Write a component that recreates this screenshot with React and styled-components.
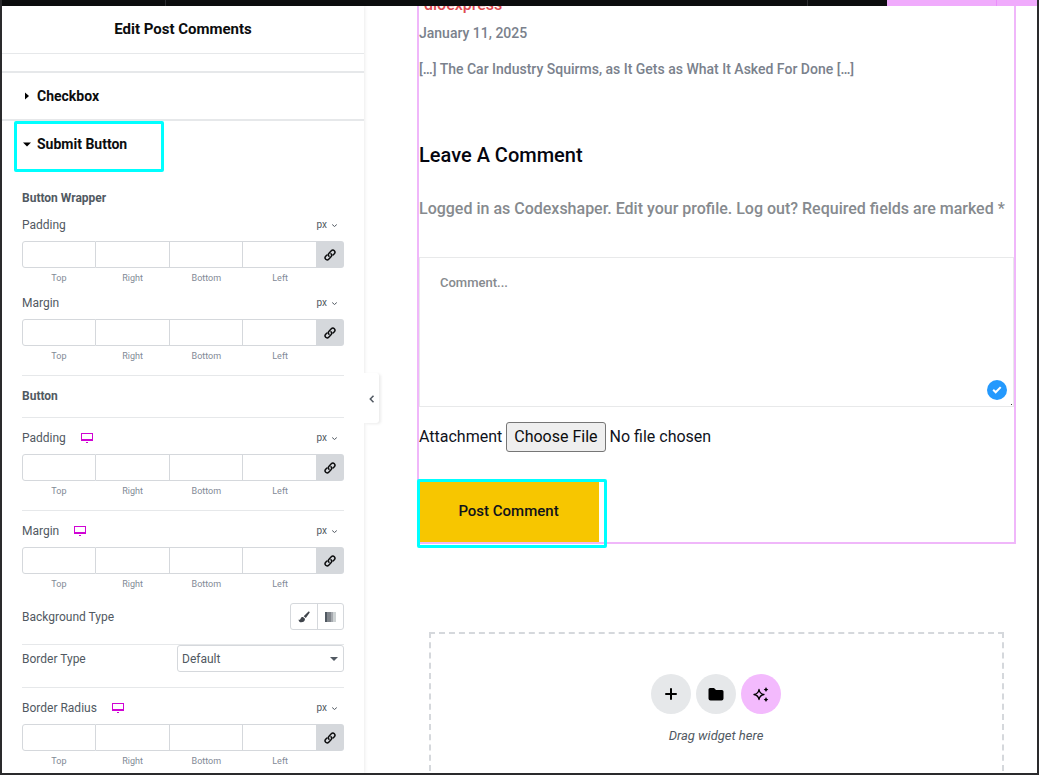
import React, { useId } from "react";
import styled, { createGlobalStyle, css } from "styled-components";

const Global = createGlobalStyle`
  *, *::before, *::after { box-sizing: border-box; }
  body { margin: 0; font-family: Roboto, "Liberation Sans", sans-serif; background: #fff; }
  button, input, select, textarea { font-family: inherit; margin: 0; }
`;

const line = "#e6e8ea";
const fieldLine = "#d5d8dc";

const Shell = styled.div`
  display: flex;
  flex-direction: column;
  height: 100vh;
  overflow: hidden;
  border: 2px solid #2a2a2c;
  border-top: 0;
`;

const TopBar = styled.header`
  display: flex;
  justify-content: space-between;
  flex: none;
  height: 6px;
  background: #0c0d0e;
`;

const BarCell = styled.div`
  width: ${(p) => p.$width}px;
  border-${(p) => p.$side}: 1px solid #2c2d30;
`;

const BarEnd = styled.div`
  display: flex;
`;

const Publish = styled.div`
  width: 150px;
  padding-right: 40px;
  background: #f0abfc;
`;

const PublishSplit = styled.div`
  height: 100%;
  border-right: 1px solid #eb8efb;
`;

const Body = styled.div`
  display: flex;
  flex: 1;
  min-height: 0;
`;

const Panel = styled.aside`
  position: relative;
  z-index: 1;
  display: flex;
  flex-direction: column;
  flex: none;
  width: 362px;
  background: #fff;
  box-shadow: 0 0 4px rgba(0, 0, 0, 0.12);
`;

const PanelTitle = styled.h1`
  flex: none;
  margin: 0;
  height: 48px;
  line-height: 46px;
  border-bottom: 1px solid ${line};
  text-align: center;
  font-size: 15px;
  font-weight: 700;
  color: #0c0d0e;
`;

const PanelScroll = styled.div`
  flex: 1;
  min-height: 0;
  overflow: hidden;
  padding-top: 17px;
`;

const SectionHead = styled.button`
  display: flex;
  align-items: center;
  width: 100%;
  height: 48px;
  padding: 0 0 0 20px;
  border: 0;
  border-top: 2px solid ${line};
  background: none;
  text-align: left;
  font-size: 14px;
  font-weight: 700;
  color: #0c0d0e;

  svg { width: 10px; height: 10px; margin-right: 5px; }
`;

const Marked = styled.div`
  position: relative;

  &::after {
    content: "";
    position: absolute;
    pointer-events: none;
    border: 3px solid #00ffff;
    border-radius: 2px;
    inset: ${(p) => p.$inset};
    width: ${(p) => p.$width};
  }
`;

const Fields = styled.div`
  padding: 23px 20px 0;
`;

const Group = styled.div`
  padding-bottom: ${(p) => p.$after}px;
  ${(p) => p.$ruled && css`
    border-top: 1px solid ${line};
    padding-top: ${p.$before ?? 12}px;
  `}
`;

const GroupTitle = styled.h2`
  margin: 0;
  font-size: 12px;
  line-height: 16px;
  font-weight: 700;
  color: #515962;
`;

const Row = styled.div`
  display: flex;
  align-items: center;
  justify-content: space-between;
`;

const LabelSide = styled.div`
  display: flex;
  align-items: center;
  gap: 15px;
`;

const Label = styled.label`
  font-size: 12px;
  line-height: 16px;
  color: #515962;
`;

const IconButton = styled.button`
  display: flex;
  padding: 0;
  border: 0;
  background: none;
  color: #d004d4;
`;

const Unit = styled.button`
  display: flex;
  align-items: center;
  gap: 4px;
  padding: 0 6px 0 0;
  border: 0;
  background: none;
  font-size: 10px;
  line-height: 16px;
  color: #515962;
`;

const SideGrid = styled.div`
  display: grid;
  grid-template-columns: repeat(4, 1fr) 27px;
  margin-top: 8px;
`;

const Side = styled.label`
  display: flex;
  flex-direction: column;
  gap: 2px;
  min-width: 0;
  text-align: center;
  font-size: 9px;
  line-height: 16px;
  color: #818a96;

  &:first-child input { border-left: 1px solid ${fieldLine}; border-radius: 3px 0 0 3px; }
`;

const SideInput = styled.input`
  width: 100%;
  height: 27px;
  padding: 0 6px;
  border: 1px solid ${fieldLine};
  border-left: 0;
  font-size: 12px;
  background: #fff;
`;

const LinkButton = styled.button`
  display: flex;
  align-items: center;
  justify-content: center;
  height: 27px;
  padding: 0 1px 0 0;
  border: 0;
  border-radius: 0 3px 3px 0;
  background: ${fieldLine};
  color: #0c0d0e;
`;

const Choices = styled.div`
  display: flex;
  height: 27px;
  border: 1px solid ${fieldLine};
  border-radius: 3px;
`;

const Choice = styled.button`
  display: flex;
  align-items: center;
  justify-content: center;
  width: 26px;
  padding: 0;
  border: 0;
  background: none;
  color: #3f444b;

  & + & { border-left: 1px solid ${fieldLine}; }
`;

const SelectWrap = styled.div`
  display: grid;
  width: 167px;
  align-items: center;

  > * { grid-area: 1 / 1; }
  svg { justify-self: end; margin-right: 6px; pointer-events: none; }
`;

const Select = styled.select`
  appearance: none;
  width: 100%;
  height: 27px;
  padding: 0 4px;
  border: 1px solid ${fieldLine};
  border-radius: 3px;
  background: #fff;
  font-size: 12px;
  color: #515962;
`;

const Collapse = styled.button`
  position: absolute;
  top: 367px;
  left: 100%;
  width: 15px;
  height: 50px;
  display: flex;
  align-items: center;
  justify-content: center;
  padding: 1px 0 0;
  border: 0;
  border-radius: 0 3px 3px 0;
  background: #fff;
  box-shadow: 2px 1px 3px rgba(0, 0, 0, 0.08);
  color: #515962;
`;

const Canvas = styled.main`
  flex: 1;
  min-width: 0;
  overflow: hidden;
  padding: 0 21px 0 53px;
`;

const Widget = styled.section`
  border: 2px solid #f0b7fa;
  border-top: 0;
`;

const Author = styled.a`
  display: block;
  margin-top: -10px;
  padding-left: 5px;
  font-size: 16px;
  line-height: 18px;
  font-weight: 500;
  color: #e04a50;
  text-decoration: none;
`;

const CommentText = styled.p`
  margin: 0;
  padding-top: ${(p) => p.$before}px;
  font-size: 14px;
  line-height: 20px;
  font-weight: 500;
  color: #7a818c;
`;

const FormTitle = styled.h2`
  margin: 64px 0 0;
  font-size: 20px;
  line-height: 24px;
  font-weight: 500;
  color: #05060f;
`;

const Notice = styled.p`
  margin: 32px 0 38px;
  font-size: 16px;
  line-height: 20px;
  font-weight: 500;
  color: #868a8e;
  white-space: nowrap;
`;

const AreaWrap = styled.div`
  position: relative;
`;

const Area = styled.textarea`
  display: block;
  width: 100%;
  height: 150px;
  padding: 16px 20px;
  border: 1px solid #e8e9ea;
  resize: none;
  font-size: 13px;
  line-height: 18px;
  font-weight: 500;
  background: #fff;

  &::placeholder { color: #868a8e; opacity: 1; }
`;

const Tick = styled.span`
  position: absolute;
  right: 7px;
  bottom: 7px;
  display: flex;
  align-items: center;
  justify-content: center;
  width: 20px;
  height: 20px;
  border-radius: 50%;
  background: #2499fd;
`;

const Grip = styled.span`
  position: absolute;
  right: 2px;
  bottom: 2px;
  width: 1px;
  height: 1px;
  background: #333;
`;

const Attachment = styled.div`
  display: flex;
  align-items: center;
  gap: 4px;
  margin: 15px 0 30px;
  font-size: 16px;
  line-height: 24px;
  color: #10121c;
`;

const FileInput = styled.input`
  flex: 1;
  min-width: 0;
  height: 30px;
  font-size: 16px;
  line-height: 24px;
  color: #10121c;

  &::file-selector-button {
    height: 30px;
    margin: 0 4px 0 0;
    padding: 0 7px;
    border: 1px solid #767676;
    border-radius: 3px;
    background: #efefef;
    font: inherit;
    color: #0c0d0e;
  }
`;

const Submit = styled.button`
  display: block;
  width: 180px;
  height: 60px;
  padding: 0 1px 2px 0;
  border: 0;
  background: #f7c600;
  font-size: 15px;
  font-weight: 500;
  color: #10121c;
`;

const DropZone = styled.section`
  display: flex;
  flex-direction: column;
  align-items: center;
  gap: 12px;
  margin: 88px 12px 0;
  padding: 40px 1px 40px 0;
  height: 180px;
  border: 2px dashed #d5d8dc;
`;

const Rounds = styled.div`
  display: flex;
  gap: 5px;
`;

const Round = styled.button`
  display: flex;
  align-items: center;
  justify-content: center;
  width: 40px;
  height: 40px;
  padding: 0;
  border: 0;
  border-radius: 50%;
  background: ${(p) => (p.$accent ? "#f3bafd" : "#e6e8ea")};
  color: #000;
`;

const Hint = styled.p`
  margin: 0;
  font-size: 13px;
  line-height: 20px;
  font-style: italic;
  color: #515962;
`;

const LinkIcon = () => (
  <svg width="12" height="12" viewBox="0 0 12 12" fill="none" stroke="currentColor" strokeWidth="1.5" strokeLinecap="round">
    <path d="M5 7.2C4.1 6.2 4.2 5 5 4.200L7.300 1.800C8.200 .9 9.500 .9 10.300 1.700S11.100 3.800 10.300 4.700L9 6" />
    <path d="M7 4.800C7.900 5.800 7.800 7 7 7.800L4.700 10.200C3.800 11.100 2.500 11.100 1.700 10.300S.9 8.200 1.700 7.300L3 6" />
  </svg>
);

const Desktop = () => (
  <svg width="12" height="10" viewBox="0 0 12 10" fill="currentColor">
    <path fillRule="evenodd" d="M0 0h12v8H0zM1 1v5h10V1z" />
    <path d="M5 9h2v1H5z" />
  </svg>
);

const Chevron = () => (
  <svg width="7" height="5" viewBox="0 0 7 5" fill="none" stroke="currentColor" strokeWidth="1">
    <path d="M1.200 1.500l2.300 2 2.300-2" />
  </svg>
);

function Dimensions({ name, responsive }) {
  const id = useId();
  return (
    <>
      <Row>
        <LabelSide>
          <Label htmlFor={id + "Top"}>{name}</Label>
          {responsive && <IconButton aria-label="Desktop"><Desktop /></IconButton>}
        </LabelSide>
        <Unit>px<Chevron /></Unit>
      </Row>
      <SideGrid>
        {["Top", "Right", "Bottom", "Left"].map((side) => (
          <Side key={side} htmlFor={id + side}>
            <SideInput id={id + side} type="text" />
            {side}
          </Side>
        ))}
        <LinkButton aria-label="Link values"><LinkIcon /></LinkButton>
      </SideGrid>
    </>
  );
}

export default function App() {
  return (
    <>
      <Global />
      <Shell>
        <TopBar>
          <BarCell $width={164} $side="right" />
          <BarEnd>
            <BarCell $width={80} $side="left" />
            <Publish><PublishSplit /></Publish>
          </BarEnd>
        </TopBar>
        <Body>
          <Panel>
            <PanelTitle>Edit Post Comments</PanelTitle>
            <PanelScroll>
              <SectionHead aria-expanded="false">
                <svg viewBox="0 0 10 10"><path d="M3 1.500L7 5 3 8.500z" /></svg>
                Checkbox
              </SectionHead>
              <Marked $inset="2px auto -5px 12px" $width="150px">
                <SectionHead aria-expanded="true">
                  <svg viewBox="0 0 10 10"><path d="M1 3.500h8L5 7.500z" /></svg>
                  Submit Button
                </SectionHead>
              </Marked>
              <Fields>
                <Group $after={11}><GroupTitle>Button Wrapper</GroupTitle></Group>
                <Group $after={9}><Dimensions name="Padding" /></Group>
                <Group $after={11}><Dimensions name="Margin" /></Group>
                <Group $ruled $after={13}><GroupTitle>Button</GroupTitle></Group>
                <Group $ruled $after={11}><Dimensions name="Padding" responsive /></Group>
                <Group $ruled $after={11}><Dimensions name="Margin" responsive /></Group>
                <Group $after={14}>
                  <Row>
                    <Label as="span">Background Type</Label>
                    <Choices>
                      <Choice aria-label="Classic">
                        <svg width="12" height="12" viewBox="0 0 12 12" fill="currentColor">
                          <path d="M11.300.7c.5.4.4.9.1 1.400L7.800 7 5.700 5.300 10 .9c.4-.4.900-.5 1.300-.2zM5 6l2 1.700c.1 2.300-1.600 3.600-3.700 3.600C1.500 11.300.6 10 .6 8.400c1.300.8 1.800-.1 2.200-1.200C3.200 6.300 4 5.800 5 6z" />
                        </svg>
                      </Choice>
                      <Choice aria-label="Gradient">
                        <svg width="12" height="10" viewBox="0 0 12 10">
                          <path fill="#515962" d="M0 0h2v10H0z" />
                          <path fill="#81868c" d="M2 0h4v10H2z" />
                          <path fill="#a6aaaf" d="M6 0h2v10H6z" />
                          <path fill="#cdd2d3" d="M8 0h3v10H8z" />
                        </svg>
                      </Choice>
                    </Choices>
                  </Row>
                </Group>
                <Group $ruled $before={0} $after={15}>
                  <Row>
                    <Label htmlFor="border-type">Border Type</Label>
                    <SelectWrap>
                      <Select id="border-type"><option>Default</option></Select>
                      <svg width="8" height="4" viewBox="0 0 8 4" fill="#515962"><path d="M0 0h8L4 4z" /></svg>
                    </SelectWrap>
                  </Row>
                </Group>
                <Group $ruled $after={11}><Dimensions name="Border Radius" responsive /></Group>
              </Fields>
            </PanelScroll>
            <Collapse aria-label="Hide panel">
              <svg width="6" height="8" viewBox="0 0 6 8" fill="none" stroke="currentColor" strokeWidth="1.500">
                <path d="M4.500 .7L1.300 4l3.200 3.300" />
              </svg>
            </Collapse>
          </Panel>
          <Canvas>
            <Widget>
              <Author href="#">dioexpress</Author>
              <CommentText $before={9}>January 11, 2025</CommentText>
              <CommentText $before={16}>[…] The Car Industry Squirms, as It Gets as What It Asked For Done […]</CommentText>
              <FormTitle>Leave A Comment</FormTitle>
              <Notice>Logged in as Codexshaper. Edit your profile. Log out? Required fields are marked *</Notice>
              <AreaWrap>
                <Area aria-label="Comment" placeholder="Comment..." />
                <Tick>
                  <svg width="10" height="8" viewBox="0 0 10 8" fill="none" stroke="#fff" strokeWidth="2"><path d="M1.200 3.800l2.500 2.500 5-5.200" /></svg>
                </Tick>
                <Grip />
              </AreaWrap>
              <Attachment>
                <label htmlFor="attachment">Attachment</label>
                <FileInput id="attachment" type="file" />
              </Attachment>
              <Marked $inset="-3px auto -6px -2px" $width="190px">
                <Submit>Post Comment</Submit>
              </Marked>
            </Widget>
            <DropZone>
              <Rounds>
                <Round aria-label="Add container">
                  <svg width="12" height="12" viewBox="0 0 12 12" stroke="currentColor" strokeWidth="2" strokeLinecap="round"><path d="M6 1v10M1 6h10" /></svg>
                </Round>
                <Round aria-label="Add template">
                  <svg width="16" height="14" viewBox="0 0 16 14" fill="currentColor"><path d="M2 1h4l2 2h6q1.500 0 1.500 1.500v7Q15.500 13.500 13.500 13.500h-11Q.5 13.500.5 11.500v-9Q.5 1 2 1z" /></svg>
                </Round>
                <Round $accent aria-label="Build with AI">
                  <svg width="16" height="16" viewBox="0 0 16 16">
                    <path fill="none" stroke="currentColor" strokeWidth="1.300" strokeLinejoin="round" d="M6 3.500Q6.700 7.800 11 8.500 6.700 9.200 6 13.500 5.300 9.200 1 8.500 5.300 7.800 6 3.500z" />
                    <path d="M13 1q.5 2 2.300 2.500Q13.500 4 13 6q-.5-2-2.300-2.500Q12.500 3 13 1zM13 11q.5 2 2.300 2.500-1.800.5-2.300 2.500-.5-2-2.300-2.500 1.800-.5 2.300-2.500z" />
                  </svg>
                </Round>
              </Rounds>
              <Hint>Drag widget here</Hint>
            </DropZone>
          </Canvas>
        </Body>
      </Shell>
    </>
  );
}
